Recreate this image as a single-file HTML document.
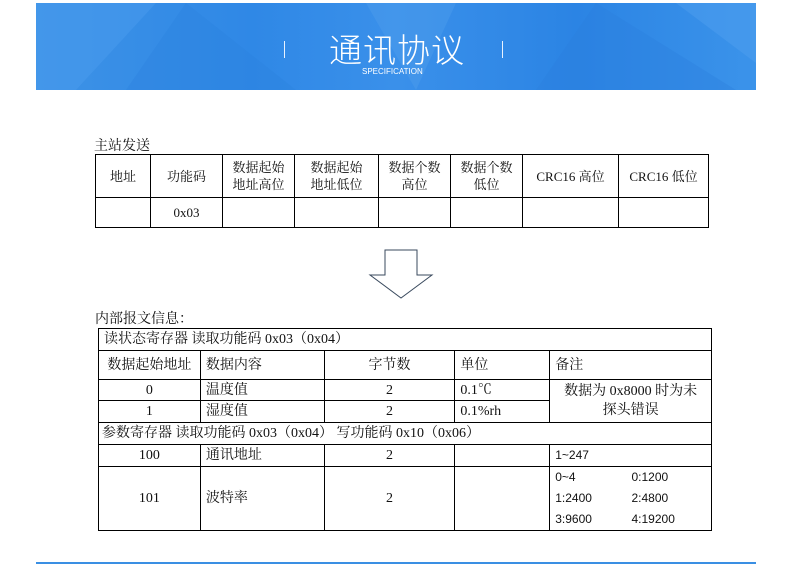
<!DOCTYPE html>
<html><head><meta charset="utf-8"><style>
body{margin:0;width:790px;height:565px;background:#fff;position:relative;overflow:hidden;font-family:"Liberation Serif","Noto Serif CJK SC",serif;color:#111}
.ban{position:absolute;left:36px;top:3px;width:720px;height:87px;background:linear-gradient(90deg,#3d92e6,#2f88e6 30%,#3a90ea 50%,#2b84e4 75%,#3b93ea);overflow:hidden}
.t{position:absolute;font-family:"Noto Sans CJK SC",sans-serif;font-weight:300;color:#fff}
.bar{position:absolute;width:1px;height:17px;background:#e8f2ff;top:41px}
.a{position:absolute;font-size:14px;white-space:nowrap}
table{position:absolute;border-collapse:collapse;font-size:13px;font-family:"Liberation Serif","Noto Serif CJK SC",serif}
td{border:1px solid #000;padding:0;text-align:center;line-height:17px}
.l{text-align:left;padding-left:5px}
.t2{font-size:14px}
</style></head><body>
<div class="ban">
<svg width="720" height="87" style="position:absolute;left:0;top:0">
<polygon points="0,0 120,0 40,87 0,87" fill="#4a9ced" opacity=".5"/>
<polygon points="150,0 260,87 90,87" fill="#2a80dd" opacity=".35"/>
<polygon points="330,0 420,0 380,87" fill="#5aa6f0" opacity=".3"/>
<polygon points="560,0 700,87 500,87" fill="#2a7fdc" opacity=".35"/>
<polygon points="640,0 720,0 720,60" fill="#55a3ef" opacity=".4"/>
</svg>
</div>
<div class="bar" style="left:284px"></div><div class="bar" style="left:502px"></div>
<div class="t" style="left:329px;top:24px;font-size:33px;letter-spacing:1px">通讯协议</div>
<div class="t" style="left:362px;top:67px;font-size:8px;font-family:'Liberation Sans',sans-serif">SPECIFICATION</div>

<div class="a" style="left:94px;top:135px">主站发送</div>
<table style="left:95px;top:154px;width:614px">
<colgroup><col style="width:55px"><col style="width:72px"><col style="width:72px"><col style="width:84px"><col style="width:72px"><col style="width:72px"><col style="width:96px"><col style="width:90px"></colgroup>
<tr style="height:43px"><td>地址</td><td>功能码</td><td>数据起始<br>地址高位</td><td>数据起始<br>地址低位</td><td>数据个数<br>高位</td><td>数据个数<br>低位</td><td>CRC16 高位</td><td>CRC16 低位</td></tr>
<tr style="height:30px"><td></td><td>0x03</td><td></td><td></td><td></td><td></td><td></td><td></td></tr>
</table>
<svg width="70" height="52" style="position:absolute;left:368px;top:249px"><polygon points="17,1 49,1 49,26 64,26 33,49 2,26 17,26" fill="none" stroke="#3a4a5e" stroke-width="1"/></svg>

<div class="a" style="left:95px;top:308px">内部报文信息：</div>
<table class="t2" style="left:98px;top:328px;width:614px">
<colgroup><col style="width:102px"><col style="width:124px"><col style="width:131px"><col style="width:95px"><col style="width:162px"></colgroup>
<tr style="height:22px"><td colspan="5" class="l">读状态寄存器 读取功能码 0x03（0x04）</td></tr>
<tr style="height:29px"><td>数据起始地址</td><td class="l">数据内容</td><td>字节数</td><td class="l">单位</td><td class="l">备注</td></tr>
<tr style="height:21px"><td>0</td><td class="l">温度值</td><td>2</td><td class="l">0.1℃</td><td rowspan="2" style="line-height:19px">数据为 0x8000 时为未<br>探头错误</td></tr>
<tr style="height:22px"><td>1</td><td class="l">湿度值</td><td>2</td><td class="l">0.1%rh</td></tr>
<tr style="height:22px"><td colspan="5" class="l" style="padding-left:3px">参数寄存器 读取功能码 0x03（0x04） 写功能码 0x10（0x06）</td></tr>
<tr style="height:22px"><td>100</td><td class="l">通讯地址</td><td>2</td><td></td><td class="l" style="font-family:'Liberation Sans',sans-serif;font-size:12px">1~247</td></tr>
<tr style="height:64px"><td>101</td><td class="l">波特率</td><td>2</td><td></td><td class="l" style="font-family:'Liberation Sans',sans-serif;font-size:12px;line-height:21px">0~4<span style="position:absolute;left:533px">0:1200</span><br>1:2400<span style="position:absolute;left:533px">2:4800</span><br>3:9600<span style="position:absolute;left:533px">4:19200</span></td></tr>
</table>
<div style="position:absolute;left:36px;top:562px;width:720px;height:2px;background:#3a8fe3"></div>
</body></html>
